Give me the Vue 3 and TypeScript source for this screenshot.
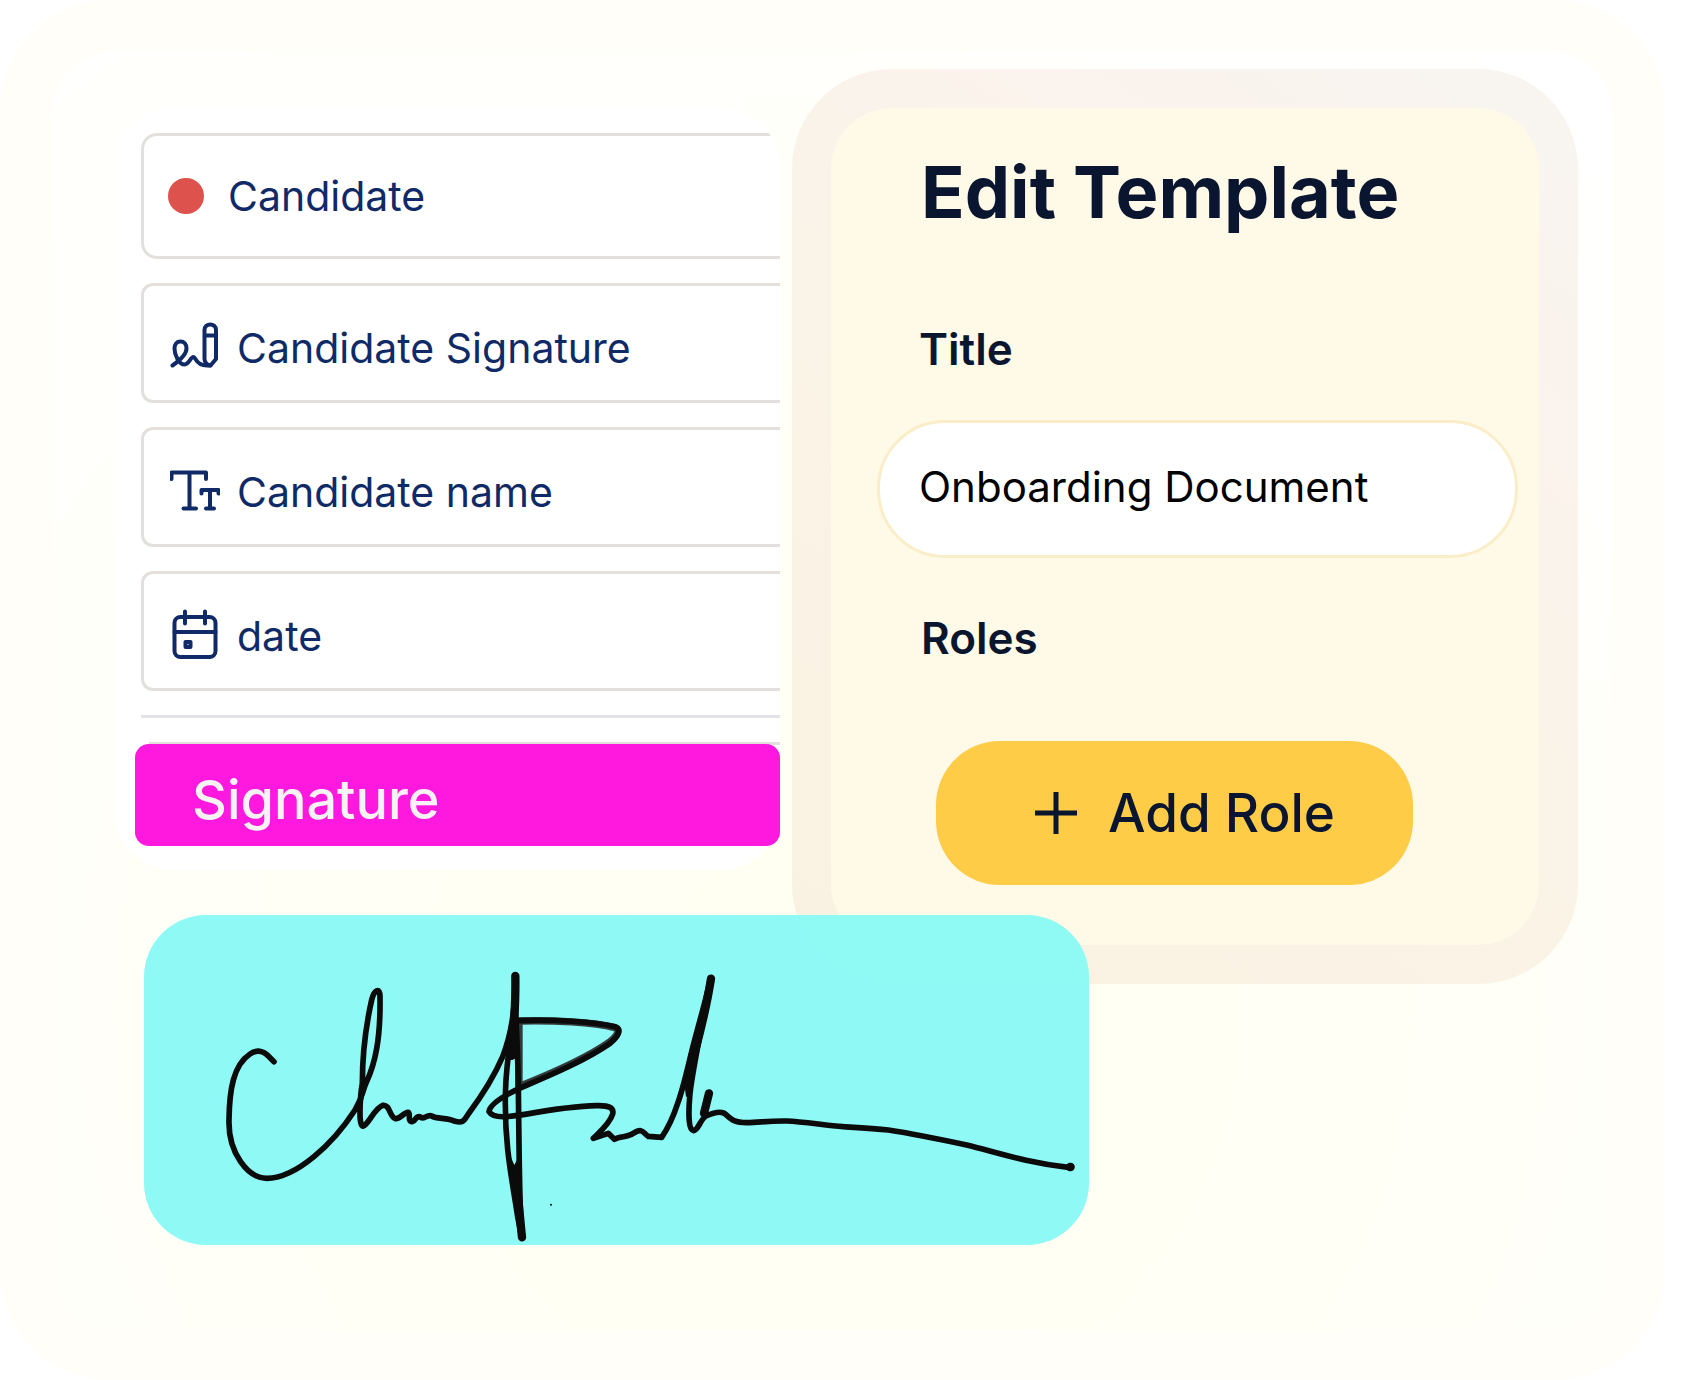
<script setup lang="ts">
import { ref } from 'vue'

type FieldIcon = 'signature' | 'text' | 'date'

const fields: { icon: FieldIcon; label: string }[] = [
  { icon: 'signature', label: 'Candidate Signature' },
  { icon: 'text', label: 'Candidate name' },
  { icon: 'date', label: 'date' },
]

const title = ref('Onboarding Document')
</script>

<template>
  <main class="page">
    <div class="frame">
      <div class="canvas">
        <section class="fields" aria-label="Fields">
          <button type="button" class="row role">
            <span class="dot"></span>
            <span>Candidate</span>
          </button>
          <button v-for="field in fields" :key="field.label" type="button" class="row field">
            <svg v-if="field.icon === 'signature'" class="icon" viewBox="0 0 50 50" aria-hidden="true">
              <path d="M2.5 44.500C9 40 16.500 33 16.500 27.500C16.500 23 14 20.500 10.500 20.500C7 20.500 4.500 23 4.500 27.500C4.500 34 9 43.500 14.500 43.500C19 43.500 20.500 36 23.500 36C26 36 25.500 44.500 37 44.500H40.500" />
              <path d="M34.500 9C34.500 1.500 46 1.500 46 9V38L40.500 44.500C37 44.500 34.500 41 34.500 38ZM34.500 14.500H46" />
            </svg>
            <svg v-else-if="field.icon === 'text'" class="icon" viewBox="0 0 50 50" aria-hidden="true">
              <path d="M1.500 14V7.500H36V14M19.500 7.500V43.500M13.500 43.500H26M31.500 28.500V25H48.500V28.500M40 25V43.500M36 43.500H44" />
            </svg>
            <svg v-else class="icon" viewBox="0 0 50 50" aria-hidden="true">
              <rect x="4.500" y="8" width="41" height="40" rx="6" />
              <path d="M4.500 23H45.500M15 2.500V14.500M35 2.500V14.500" />
              <rect x="15.500" y="33" width="5" height="5" />
            </svg>
            <span>{{ field.label }}</span>
          </button>
          <hr class="rule" />
          <div class="slot">
            <button type="button" class="signature-button">Signature</button>
          </div>
        </section>

        <form class="template" @submit.prevent>
          <h1>Edit Template</h1>
          <label class="caption" for="template-title">Title</label>
          <input id="template-title" v-model="title" class="title-input" type="text" />
          <h2 class="caption roles">Roles</h2>
          <button type="button" class="add-role">
            <svg class="plus" viewBox="0 0 42 42" aria-hidden="true"><path d="M21 0V42M0 21H42" /></svg>
            <span>Add Role</span>
          </button>
        </form>

        <figure class="signed">
          <svg viewBox="-168 -105 2835 990" role="img" aria-label="Handwritten signature">
            <path class="grain" d="M957 213C1060 210 1180 217 1245 233C1262 238 1254 256 1228 277C1150 332 1040 377 957 410Z" />
            <g class="ink">
              <path d="M222 335L205 318C190 302 170 298 150 312C100 345 88 420 87 510C84 610 145 685 200 685C290 685 400 580 465 480C488 442 486 425 500 395C525 340 542 270 540 140C540 110 522 120 515 150C497 230 487 320 487 400C480 440 480 460 480 490C480 520 485 530 490 528C508 520 522 476 548 466C570 462 568 500 586 506C602 508 612 485 625 487C632 490 622 515 636 515C650 512 645 497 660 500C670 512 680 492 695 498C712 508 740 502 765 514C790 520 792 512 805 492C840 445 880 385 908 320C935 250 945 180 946 75" />
              <path d="M946 190C930 270 917 360 916 440C914 590 935 680 953 800L965 862" />
              <path d="M946 190C955 300 955 420 956 500C958 640 958 760 965 862" />
              <path d="M960 212C1060 208 1180 215 1245 230C1266 238 1256 258 1230 280C1150 335 1040 380 965 412C930 428 870 458 867 485C880 508 930 500 975 493C1060 478 1130 468 1190 467C1230 466 1242 475 1238 492C1230 520 1200 545 1180 565L1225 550L1243 568C1260 558 1285 562 1300 550C1330 530 1330 552 1345 559L1385 562C1400 540 1420 500 1433 460C1455 400 1470 320 1484 270C1500 210 1520 140 1532 84" />
              <path d="M1532 84C1515 190 1480 340 1470 430C1464 500 1466 540 1481 542C1495 540 1500 510 1518 498C1540 488 1565 480 1578 494C1595 510 1605 518 1640 518C1680 518 1700 512 1760 513C1810 515 1870 525 1930 530C1980 533 2020 535 2065 540C2150 553 2230 570 2300 585C2390 607 2480 638 2605 652" />
            </g>
            <g class="ink heavy">
              <path d="M946 78C947 140 944 190 942 230" />
              <path d="M955 750L966 862" />
              <path d="M1533 86C1520 170 1502 240 1486 300" />
              <path d="M1527 430L1512 490" />
              <path d="M2610 651H2612" />
            </g>
            <path class="wedge" d="M942 210L956 210L956 320L937 330L925 330Z" />
            <path class="wedge" d="M932 620L943 645L956 620L960 760L948 760Z" />
            <path class="wedge" d="M1482 290L1490 290L1468 440L1458 440L1454 410Z" />
            <path class="wedge" d="M484 400L500 395L490 450L475 470Z" />
            <circle cx="1053" cy="764" r="3" />
          </svg>
        </figure>
      </div>
    </div>
  </main>
</template>

<style>
body {
  margin: 0;
  background: #ffffff;
}
</style>

<style scoped>
* {
  box-sizing: border-box;
}

.page {
  padding-right: 33px;
  font-family: Inter, "Liberation Sans", sans-serif;
  color: #0a162f;
}

.frame {
  padding: 51px 53px 50px 52px;
  border-radius: 110px;
  background: #fffef8;
}

.canvas {
  display: grid;
  grid-template-columns: minmax(0, 666fr) minmax(0, 786fr);
  column-gap: 12px;
  align-items: start;
  padding: 18px 34px 85px 62px;
  border-radius: 60px;
  background:
    radial-gradient(circle at 100% 0%, #ffffff 0%, rgba(255, 255, 255, 0) 45%),
    radial-gradient(circle at 50% 75%, #fffff1 0%, #fffff5 40%, #fffffb 75%, #fffffd 100%);
}

button,
input {
  margin: 0;
  font: inherit;
  color: inherit;
}

button {
  cursor: pointer;
}

.fields {
  display: flex;
  flex-direction: column;
  gap: 24px;
  margin-top: 39px;
  padding: 25px 0 24px 27px;
  border-radius: 60px;
  background: #ffffff;
  clip-path: inset(0 round 0 60px 0 0);
}

.row {
  display: flex;
  align-items: center;
  height: 120px;
  padding: 10px 0 0 26px;
  gap: 17px;
  border: 3px solid #e3dfdd;
  border-right: 0;
  border-radius: 12px 0 0 12px;
  background: #ffffff;
  font-size: 41px;
  line-height: 48px;
  color: #0f2a66;
  white-space: nowrap;
}

.role {
  height: 126px;
  padding: 0 0 0 24px;
  gap: 24px;
  border-radius: 16px 0 0 16px;
}

.dot {
  width: 36px;
  height: 36px;
  border-radius: 50%;
  background: #dd524c;
}

.icon {
  width: 50px;
  height: 50px;
  margin-top: -4px;
  fill: none;
  stroke: #0f2a66;
  stroke-width: 4;
  stroke-linecap: round;
  stroke-linejoin: round;
}

.rule {
  width: 100%;
  height: 3px;
  margin: 0;
  border: 0;
  background: #e2e3e8;
}

.slot {
  margin-left: -6px;
  background: linear-gradient(#e3dfdd, #e3dfdd) 14px 0 / 100% 3px no-repeat;
  padding-top: 2px;
}

.signature-button {
  display: block;
  width: 100%;
  height: 102px;
  padding: 9px 0 0 57px;
  border: 0;
  border-radius: 14px;
  background: #ff19df;
  color: #f7f3f4;
  font-size: 54px;
  font-weight: 500;
  line-height: 60px;
  text-align: left;
}

.template {
  display: flex;
  flex-direction: column;
  padding: 40px 21px 60px 46px;
  border: 39px solid transparent;
  border-radius: 100px;
  background:
    linear-gradient(#fff9e7, #fff9e7) padding-box,
    linear-gradient(215deg, #f8f5f0 0%, #f9f4ee 14%, #fbf3ed 24%, #faf3e6 60%, #f9f2e2 100%) border-box;
}

h1 {
  margin: 0 0 85px 44px;
  font-size: 72px;
  font-weight: 700;
  line-height: 88px;
  white-space: nowrap;
}

.caption {
  margin: 0 0 43px 42px;
  font-size: 44px;
  font-weight: 600;
  line-height: 56px;
}

.title-input {
  width: 100%;
  height: 138px;
  padding: 0 40px 6px 39px;
  border: 3px solid #faedc8;
  border-radius: 68px;
  background: #ffffff;
  color: #000000;
  font-size: 42px;
  outline: none;
}

.caption.roles {
  margin: 52px 0 75px 44px;
}

.add-role {
  display: flex;
  align-items: center;
  gap: 31px;
  width: 477px;
  max-width: 100%;
  height: 144px;
  margin-left: 59px;
  padding: 0 0 0 99px;
  border: 0;
  border-radius: 64px;
  background: #ffcc47;
  font-size: 53px;
  font-weight: 500;
  white-space: nowrap;
}

.plus {
  width: 42px;
  height: 42px;
  fill: none;
  stroke: #0a162f;
  stroke-width: 5;
}

.signed {
  grid-column: 1 / -1;
  z-index: 1;
  width: 64.55%;
  margin: -69px 0 0 30px;
  border-radius: 62px;
  background: rgba(138, 249, 245, 0.96);
  overflow: hidden;
}

.signed svg {
  display: block;
  width: 100%;
}

.ink {
  fill: none;
  stroke: #0b0b0b;
  stroke-width: 17;
  stroke-linecap: round;
  stroke-linejoin: round;
}

.heavy {
  stroke-width: 25;
}

.wedge {
  fill: #0b0b0b;
}

.grain {
  fill: none;
  stroke: #333a3a;
  stroke-width: 22;
  stroke-linejoin: round;
}
</style>
